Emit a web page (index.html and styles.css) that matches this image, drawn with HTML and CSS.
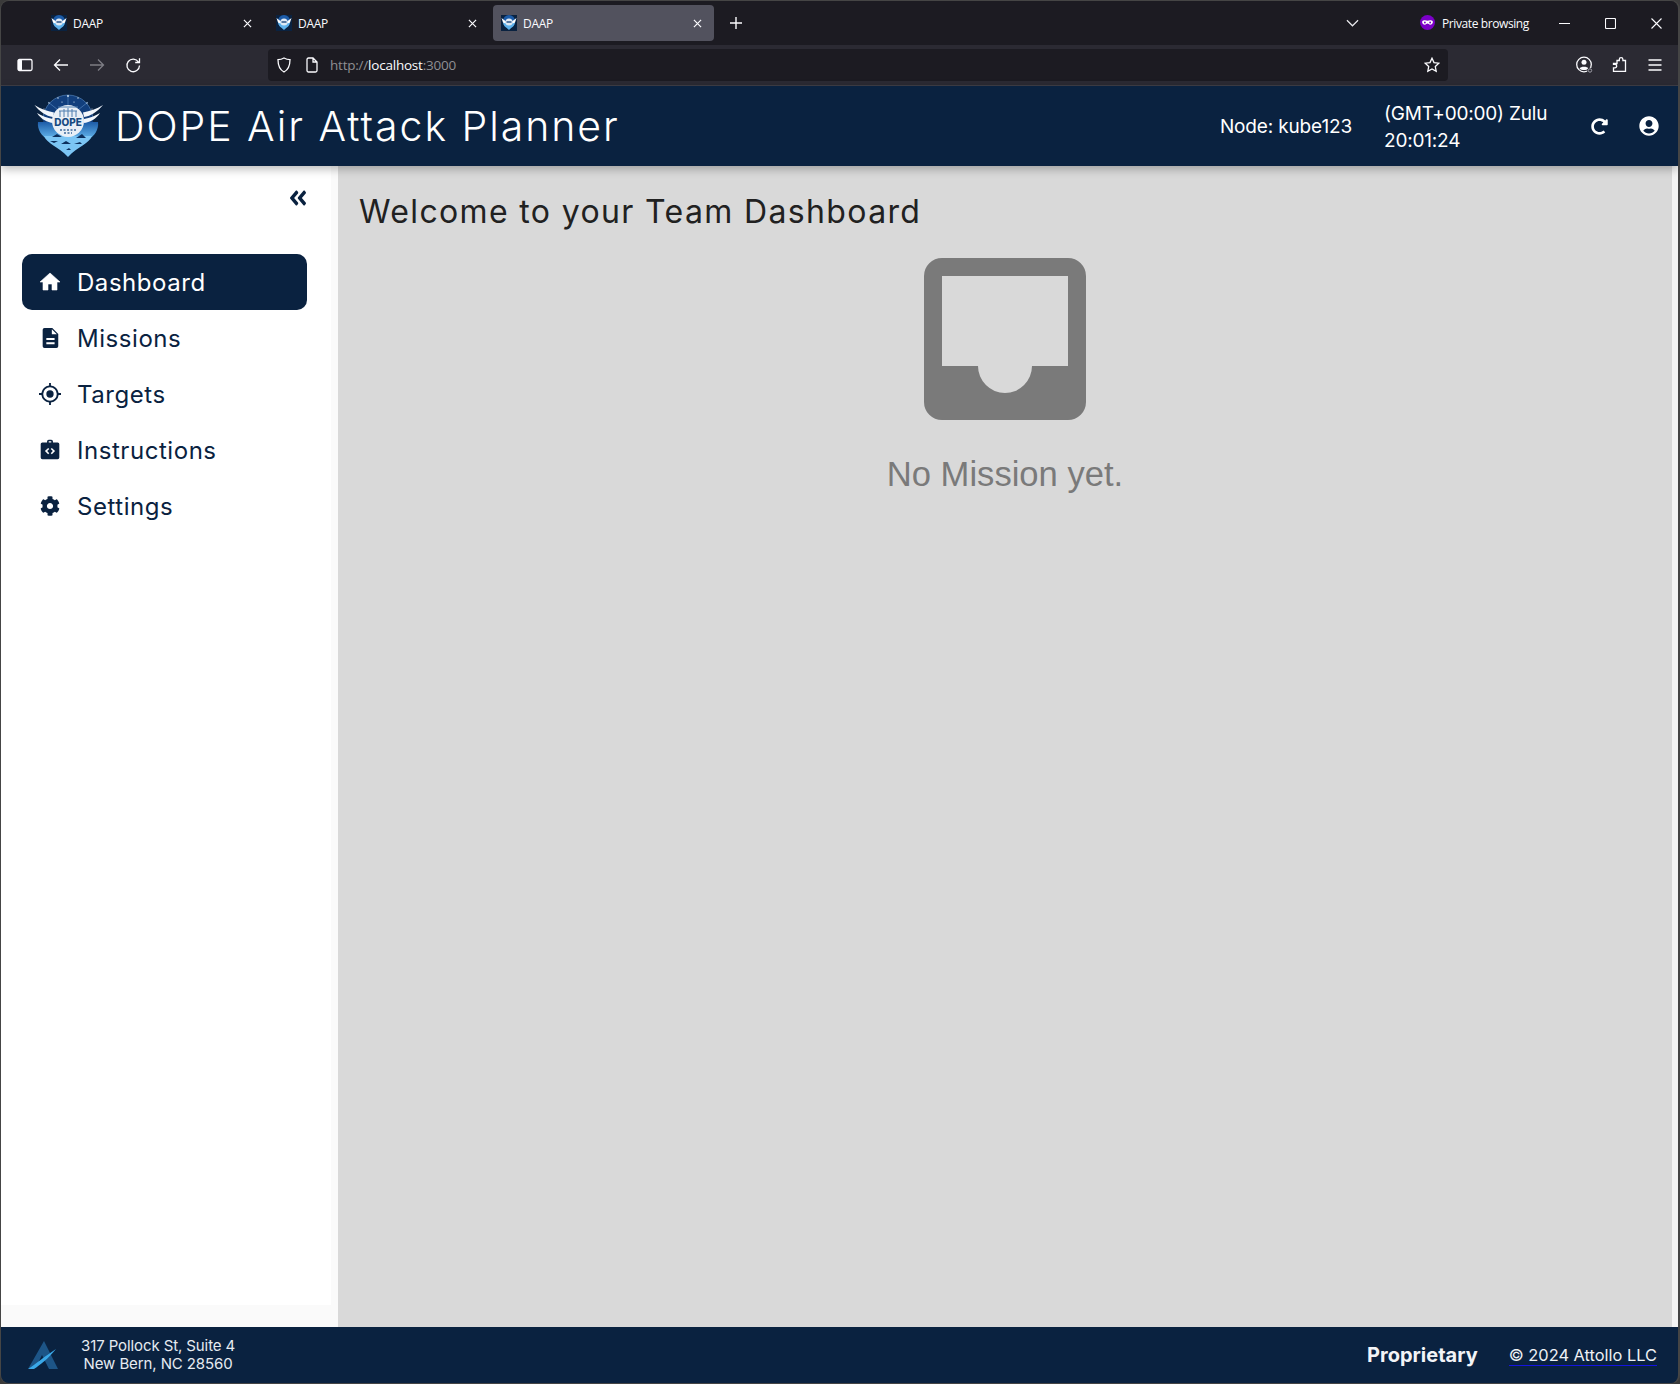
FILE: index.html
```html
<!DOCTYPE html>
<html lang="en">
<head>
<meta charset="utf-8">
<title>DAAP</title>
<link rel="stylesheet" href="styles.css">
</head>
<body>
<svg class="defs" width="0" height="0" aria-hidden="true">
  <defs>
    <linearGradient id="sea" x1="0" y1="0" x2="0" y2="1"><stop offset="0" stop-color="#1d5ca8"/><stop offset="1" stop-color="#66b8ee"/></linearGradient>
    <symbol id="favicon" viewBox="0 0 16 16">
      <rect width="16" height="16" fill="#0a2240"/>
      <circle cx="8" cy="6" r="6" fill="#1d5ca8"/>
      <path d="M2 7h12c0 4-3 5-6 8-3-3-6-4-6-8z" fill="#5fb2ec"/>
      <path d="M0.5 3 5 6.5 4.5 8.5 2 7.5zM15.5 3 11 6.500 11.500 8.500 14 7.500z" fill="#fff"/>
      <circle cx="8" cy="7" r="3.600" fill="#dfe9f3"/>
      <rect x="5.500" y="6.300" width="5" height="1.400" fill="#1d4a80"/>
    </symbol>
  </defs>
</svg>
<div class="window">
  <div class="tabbar">
    <div class="tab"><svg class="favicon"><use href="#favicon"/></svg><span class="tab-title">DAAP</span><svg class="tab-x" viewBox="0 0 10 10"><path d="M1 1l8 8M9 1l-8 8"/></svg></div>
    <div class="tab"><svg class="favicon"><use href="#favicon"/></svg><span class="tab-title">DAAP</span><svg class="tab-x" viewBox="0 0 10 10"><path d="M1 1l8 8M9 1l-8 8"/></svg></div>
    <div class="tab tab-active"><svg class="favicon"><use href="#favicon"/></svg><span class="tab-title">DAAP</span><svg class="tab-x" viewBox="0 0 10 10"><path d="M1 1l8 8M9 1l-8 8"/></svg></div>
    <svg class="new-tab" viewBox="0 0 12 12"><path d="M6 0v12M0 6h12"/></svg>
    <svg class="tab-list" viewBox="0 0 14 8"><path d="M1 1l6 6 6-6"/></svg>
    <div class="private">
      <svg class="private-icon" viewBox="0 0 16 16"><circle cx="8" cy="8" r="8" fill="#7b00c8"/><path d="M2.500 6.500c1-1.300 3.800-1.300 5.500-.3 1.700-1 4.500-1 5.500.3.600 1.500 0 3.800-2.500 3.800-1.500 0-2-1.300-3-1.300s-1.500 1.300-3 1.300c-2.500 0-3.100-2.300-2.500-3.800z" fill="#fff"/><circle cx="5.200" cy="8" r="1" fill="#7b00c8"/><circle cx="10.800" cy="8" r="1" fill="#7b00c8"/></svg>
      <span class="private-label">Private browsing</span>
    </div>
    <div class="win-controls">
      <svg viewBox="0 0 11 11"><path d="M0 5.500h11"/></svg>
      <svg viewBox="0 0 11 11"><rect x=".5" y=".5" width="10" height="10" rx="1"/></svg>
      <svg viewBox="0 0 11 11"><path d="M.5.500l10 10M10.500.500l-10 10"/></svg>
    </div>
  </div>
  <div class="toolbar">
    <div class="nav-icons">
      <svg class="tool" viewBox="0 0 16 16"><rect x="1" y="2.500" width="14" height="11" rx="1.500" class="line"/><rect x="1" y="2.500" width="4" height="11" rx="1" class="solid"/></svg>
      <svg class="tool" viewBox="0 0 16 16"><path class="line" d="M15 8H1.500M7 2.500 1.500 8 7 13.500"/></svg>
      <svg class="tool tool-off" viewBox="0 0 16 16"><path class="line" d="M1 8h13.500M9 2.500 14.500 8 9 13.500"/></svg>
      <svg class="tool" viewBox="0 0 16 16"><path class="line" d="M13.500 5A6.300 6.300 0 1 0 14.500 8.500M14.500 1.200v4.300h-4.300"/></svg>
    </div>
    <div class="urlbar">
      <svg class="url-icon" viewBox="0 0 16 16"><path class="line" d="M8 1c2 1.200 4 1.700 6 1.700 0 5.500-1.500 9.800-6 12.300C3.500 12.500 2 8.200 2 2.700 4 2.700 6 2.200 8 1z"/></svg>
      <svg class="url-icon" viewBox="0 0 16 16"><path class="line" d="M3 2.500A1.500 1.500 0 0 1 4.500 1H9l4 4v8.500a1.500 1.500 0 0 1-1.500 1.500h-7A1.500 1.500 0 0 1 3 13.500zM9 1v4h4"/></svg>
      <span class="url"><span class="url-dim">http://</span>localhost<span class="url-dim">:3000</span></span>
      <svg class="url-star" viewBox="0 0 16 16"><path class="line" d="M8 1.200l2 4.400 4.800.6-3.500 3.300.9 4.800L8 12l-4.200 2.300.9-4.800L1.200 6.200 6 5.600z"/></svg>
    </div>
    <div class="tool-right">
      <svg class="tool tool-account" viewBox="0 0 18 18"><circle class="line" cx="8" cy="8.500" r="7.300"/><circle cx="8" cy="6.300" r="2.500" fill="#fbfbfe"/><path d="M3.500 12.500c1-2.500 8-2.500 9 0-2 2-7 2-9 0z" fill="#fbfbfe"/><circle cx="14" cy="14.500" r="2.800" fill="#2b2a33"/><circle cx="14" cy="14.500" r="1.700" fill="none" stroke="#a0a0a8" stroke-width="1"/></svg>
      <svg class="tool tool-ext" viewBox="0 0 16 16"><path class="line" d="M6 3.500h2.300V2.500a1.800 1.800 0 0 1 3.600 0v1h2.600v10.800H2.500v-3.500H4a1.700 1.700 0 0 0 0-3.400H2.500V6.500H6z"/></svg>
      <svg class="tool" viewBox="0 0 16 16"><path class="line" d="M1.500 3h13M1.500 8h13M1.500 13h13"/></svg>
    </div>
  </div>
  <header class="app-header">
    <svg class="logo" viewBox="0 0 70 64">
      <circle cx="34" cy="26" r="25" fill="#123f7d"/>
      <path d="M34 1v22M34 24 14 8M34 24 54 8M9 26a25 25 0 0 1 50 0" stroke="#5c8fc8" stroke-width=".6" fill="none"/>
      <g fill="#dcebf8"><circle cx="34" cy="2" r=".9"/><circle cx="24" cy="4" r=".7"/><circle cx="44" cy="4" r=".7"/><circle cx="15" cy="9" r=".7"/><circle cx="53" cy="9" r=".7"/><circle cx="10" cy="15" r=".6"/><circle cx="58" cy="15" r=".6"/><circle cx="28" cy="8" r=".6"/><circle cx="40" cy="8" r=".6"/></g>
      <path d="M4 28H64C65 36 60 42 55 45H13C8 42 3 36 4 28z" fill="url(#sea)"/>
      <path d="M10 42H58C55 50 44 52 34 63 24 52 13 50 10 42z" fill="#7cc5f4"/>
      <path d="M18 43l5-3 5 3zM42 44l6-4 4 4zM27 50l5-3 5 3zM16 47h8l-4 2zM40 50l6-2 2 2zM32 56l3-2 2 2z" fill="#0d2f5c"/>
      <path d="M0.500 11C7 15 13 17 20 18.500L19 23C12 22 6 18 .5 11zM3 19C8 22 13 24 19 25L19.500 29C13 28.500 7 25 3 19z" fill="#f2f6fb"/>
      <path d="M69 11C62.500 15 56 17 49 18.500L50 23C57 22 63 18 69 11zM66 19C61 22 56 24 50 25L49.500 29C56 28.500 62 25 66 19z" fill="#f2f6fb"/>
      <circle cx="34" cy="27" r="16" fill="#e9eff6"/>
      <path d="M24 13h20M26 17v6M30 15v8M34 14v9M38 15v8M42 17v6M25 17h18" stroke="#4f7fb0" stroke-width="1" fill="none"/>
      <text x="34" y="31.500" class="logo-text">DOPE</text>
      <path d="M26 36h16M30 39h8" stroke="#3b6a9c" stroke-width="1.400" stroke-dasharray="2 1.500" fill="none"/>
    </svg>
    <h1 class="app-title">DOPE Air Attack Planner</h1>
    <div class="node">Node: kube123</div>
    <div class="clock"><div>(GMT+00:00) Zulu</div><div>20:01:24</div></div>
    <svg class="head-refresh" viewBox="0 0 512 512"><path d="M256.455 8c66.269.119 126.437 26.233 170.859 68.685l35.715-35.715C478.149 25.851 504 36.559 504 57.941V192c0 13.255-10.745 24-24 24H345.941c-21.382 0-32.090-25.851-16.971-40.971l41.750-41.750c-30.864-28.899-70.801-44.907-113.230-45.273-92.398-.798-170.283 73.977-169.484 169.442C88.764 348.009 162.184 424 256 424c41.127 0 79.997-14.678 110.629-41.556 4.743-4.161 11.906-3.908 16.368.553l39.662 39.662c4.872 4.872 4.631 12.815-.482 17.433C378.202 479.813 319.926 504 256 504 119.034 504 8.001 392.967 8 256.002 7.999 119.193 119.646 7.755 256.455 8z"/></svg>
    <svg class="head-user" viewBox="0 0 496 512"><path d="M248 8C111 8 0 119 0 256s111 248 248 248 248-111 248-248S385 8 248 8zm0 96c48.600 0 88 39.400 88 88s-39.400 88-88 88-88-39.400-88-88 39.400-88 88-88zm0 344c-58.700 0-111.300-26.600-146.500-68.200 18.800-35.400 55.600-59.800 98.500-59.800 2.400 0 4.800.4 7.100 1.100 13 4.200 26.600 6.900 40.900 6.900 14.300 0 28-2.700 40.900-6.900 2.300-.7 4.700-1.100 7.100-1.100 42.900 0 79.700 24.400 98.500 59.800C359.300 421.400 306.700 448 248 448z"/></svg>
  </header>
  <div class="body-row">
    <aside class="sidebar">
      <div class="side-panel">
        <div class="collapse-row">
          <svg class="collapse" viewBox="0 0 448 512" preserveAspectRatio="none"><path d="M223.700 239l136-136c9.400-9.400 24.600-9.400 33.900 0l22.600 22.600c9.400 9.400 9.400 24.600 0 33.900L319.900 256l96.400 96.400c9.400 9.400 9.400 24.600 0 33.900L393.700 409c-9.400 9.400-24.600 9.400-33.900 0l-136-136c-9.500-9.400-9.500-24.600-.1-34zm-192 34l136 136c9.400 9.400 24.600 9.400 33.900 0l22.600-22.600c9.400-9.400 9.400-24.600 0-33.900L127.900 256l96.400-96.400c9.400-9.400 9.400-24.600 0-33.900L201.700 103c-9.400-9.400-24.600-9.400-33.900 0l-136 136c-9.500 9.400-9.500 24.600-.1 34z"/></svg>
        </div>
        <nav class="nav">
          <a class="nav-item nav-active"><svg class="nav-icon" viewBox="1 1 22 22"><path d="M10 20v-6h4v6h5v-8h3L12 3 2 12h3v8z" stroke="currentColor" stroke-width=".6" stroke-linejoin="round"/></svg><span>Dashboard</span></a>
          <a class="nav-item"><svg class="nav-icon" viewBox="0 0 24 24"><path fill-rule="evenodd" d="M6 1h8.500L21 7.500V21a2 2 0 0 1-2 2H6a2 2 0 0 1-2-2V3a2 2 0 0 1 2-2zM8 12v2.200h9V12zM8 16.500v2.200h9v-2.200zM14 2.500V8h5.500z"/></svg><span>Missions</span></a>
          <a class="nav-item"><svg class="nav-icon" viewBox="0 0 24 24"><path fill-rule="evenodd" d="M11 0h2v2.600A9.500 9.500 0 0 1 21.400 11H24v2h-2.600A9.500 9.500 0 0 1 13 21.400V24h-2v-2.600A9.500 9.500 0 0 1 2.600 13H0v-2h2.600A9.500 9.500 0 0 1 11 2.600zM12 4.600a7.400 7.400 0 1 0 0 14.800 7.400 7.400 0 0 0 0-14.800zM12 8a4 4 0 1 1 0 8 4 4 0 0 1 0-8z"/></svg><span>Targets</span></a>
          <a class="nav-item"><svg class="nav-icon" viewBox="-1 -1 26 26"><path fill-rule="evenodd" d="M8.500 3V2a2 2 0 0 1 2-2h3a2 2 0 0 1 2 2v1H21a2 2 0 0 1 2 2v16a2 2 0 0 1-2 2H3a2 2 0 0 1-2-2V5a2 2 0 0 1 2-2zM10.500 3h3V1.800h-3zM9.800 9.500 6 13.300l3.800 3.800 1.300-1.400-2.400-2.400 2.400-2.400zM14.200 9.500l-1.300 1.400 2.400 2.400-2.400 2.400 1.300 1.400 3.800-3.800z"/></svg><span>Instructions</span></a>
          <a class="nav-item"><svg class="nav-icon" viewBox="-26 -26 564 564"><path d="M487.400 315.700l-42.600-24.600c4.300-23.200 4.300-47 0-70.200l42.600-24.600c4.900-2.800 7.100-8.600 5.500-14-11.100-35.600-30-67.800-54.700-94.600-3.800-4.100-10-5.100-14.800-2.300L380.800 110c-17.900-15.400-38.500-27.300-60.800-35.100V25.800c0-5.600-3.900-10.500-9.400-11.700-36.700-8.200-74.300-7.800-109.200 0-5.500 1.200-9.400 6.100-9.400 11.700V75c-22.200 7.900-42.800 19.800-60.800 35.100L88.700 85.500c-4.900-2.800-11-1.900-14.800 2.300-24.700 26.700-43.600 58.900-54.700 94.600-1.700 5.400.6 11.200 5.500 14L67.300 221c-4.300 23.200-4.300 47 0 70.200l-42.600 24.600c-4.900 2.800-7.100 8.600-5.500 14 11.100 35.600 30 67.800 54.700 94.600 3.800 4.100 10 5.100 14.800 2.300l42.600-24.600c17.900 15.400 38.500 27.300 60.800 35.100v49.200c0 5.600 3.900 10.500 9.400 11.700 36.700 8.200 74.300 7.800 109.200 0 5.500-1.200 9.400-6.100 9.400-11.700v-49.200c22.200-7.900 42.800-19.800 60.800-35.100l42.600 24.600c4.900 2.800 11 1.900 14.800-2.300 24.700-26.700 43.600-58.900 54.700-94.600 1.500-5.500-.7-11.300-5.600-14.100zM256 336c-44.100 0-80-35.900-80-80s35.900-80 80-80 80 35.900 80 80-35.900 80-80 80z"/></svg><span>Settings</span></a>
        </nav>
      </div>
    </aside>
    <main class="main">
      <div class="content">
        <h2 class="page-title">Welcome to your Team Dashboard</h2>
        <div class="empty">
          <svg class="empty-icon" viewBox="0 0 162 162"><path fill-rule="evenodd" d="M18 0H144A18 18 0 0 1 162 18V144A18 18 0 0 1 144 162H18A18 18 0 0 1 0 144V18A18 18 0 0 1 18 0zM18 18V108H54A27 27 0 0 0 108 108H144V18z"/></svg>
          <p class="empty-text">No Mission yet.</p>
        </div>
      </div>
      <div class="main-edge"></div>
    </main>
  </div>
  <footer class="app-footer">
    <svg class="foot-logo" viewBox="0 0 30 29"><path d="M16 0 30 28H21L14 14 9 24 0 28z" fill="#1d5587"/><path d="M0 28C8 23 17 15 28 8 20 18 12 24 6 28z" fill="#3aa8e8"/></svg>
    <div class="address"><div>317 Pollock St, Suite 4</div><div>New Bern, NC 28560</div></div>
    <strong class="proprietary">Proprietary</strong>
    <a class="copyright">© 2024 Attollo LLC</a>
  </footer>
</div>
</body>
</html>
```
FILE: styles.css
```css
* { box-sizing: border-box; }
html, body { margin: 0; height: 1384px; background: #3a3a3a; overflow: hidden; }
.defs { display: block; height: 0; }
svg { display: block; flex: none; }

.window {
  height: 1384px;
  border-radius: 9px;
  overflow: hidden;
  border: solid #454545;
  border-width: 1px 2px 1px 1px;
  display: flex;
  flex-direction: column;
  font-family: Inter, "Liberation Sans", sans-serif;
  font-optical-sizing: none;
}

/* browser chrome */
.tabbar {
  height: 44px;
  background: #1c1b22;
  display: flex;
  align-items: flex-start;
  padding: 4px 0 0 42px;
  flex: none;
  color: #fbfbfe;
  font-family: "Open Sans", sans-serif;
}
.tab {
  width: 221px;
  height: 36px;
  margin-right: 4px;
  border-radius: 4px;
  display: flex;
  align-items: center;
  padding: 0 12px 0 8px;
}
.tab-active { background: #52525e; }
.favicon { width: 16px; height: 16px; }
.tab-title { margin-left: 6px; font-size: 12px; flex: 1; letter-spacing: -.3px; }
.tab-x { width: 9px; height: 9px; fill: none; stroke: #fbfbfe; stroke-width: 1.3; }
.new-tab { width: 12px; height: 12px; fill: none; stroke: #fbfbfe; stroke-width: 1.4; margin: 12px 0 0 12px; }
.tab-list { width: 13px; height: 8px; fill: none; stroke: #e8e8ec; stroke-width: 1.3; margin: 14px 0 0 604px; }
.private { display: flex; align-items: center; margin: 7px 0 0 61px; font-size: 12px; letter-spacing: -.4px; height: 20px; }
.private-icon { width: 15px; height: 15px; margin-right: 7px; }
.private-label { margin-top: 2px; }
.win-controls { display: flex; margin: 13px 0 0 30px; gap: 35px; }
.win-controls svg { width: 11px; height: 11px; fill: none; stroke: #fbfbfe; stroke-width: 1.1; }

.toolbar {
  height: 41px;
  background: #2b2a33;
  border-bottom: 1px solid #3f3e47;
  display: flex;
  align-items: center;
  flex: none;
  padding: 0 15px 0 16px;
}
.tool { width: 16px; height: 16px; overflow: visible; }
.tool-account { width: 18px; height: 18px; }
.tool-ext { margin: 0 1px 0 -2px; }
.tool-off { opacity: .4; }
.line { fill: none; stroke: #fbfbfe; stroke-width: 1.3; }
.solid { fill: #fbfbfe; }
.nav-icons { display: flex; gap: 20px; width: 251px; }
.urlbar {
  width: 1180px;
  height: 32px;
  background: #1c1b22;
  border-radius: 4px;
  display: flex;
  align-items: center;
  padding: 0 8px;
}
.url-icon { width: 16px; height: 16px; margin-right: 12px; }
.url-icon + .url-icon { margin-right: 10px; }
.url { flex: 1; font: 13.5px "Open Sans", sans-serif; color: #fbfbfe; letter-spacing: -.22px; }
.url-dim { color: #8f8f93; }
.url-star { width: 16px; height: 16px; }
.tool-right { display: flex; align-items: center; gap: 19px; margin-left: auto; }

/* app header */
.app-header {
  height: 80px;
  background: #0a2240;
  color: #fff;
  display: flex;
  align-items: center;
  flex: none;
  position: relative;
  z-index: 2;
  box-shadow: 0 3px 9px rgba(0, 0, 0, .28);
  padding-left: 33px;
}
.logo { width: 70px; height: 64px; }
.logo-text { font: 800 10px Inter, sans-serif; fill: #174a80; text-anchor: middle; }
.app-title { margin: 0 0 0 11px; font-size: 41px; font-weight: 300; letter-spacing: 1.95px; flex: 1; white-space: nowrap; }
.node { font-size: 19px; font-weight: 400; letter-spacing: -.15px; margin-right: 32px; }
.clock { font-size: 19px; line-height: 27px; letter-spacing: -.2px; width: 207px; margin-top: 2px; }
.head-refresh { width: 17px; height: 17px; fill: #fff; margin-right: 31px; }
.head-user { width: 20px; height: 20px; fill: #fff; margin-right: 19px; }

/* body */
.body-row { flex: 1; display: flex; min-height: 0; }
.sidebar { width: 337px; background: #fafafa; padding: 0 7px 22px 0; flex: none; display: flex; }
.side-panel { flex: 1; background: #fff; padding: 0 24px 0 21px; }
.collapse-row { height: 88px; padding-top: 20px; display: flex; justify-content: flex-end; }
.collapse { width: 18px; height: 24px; fill: #0a2240; }
.nav { display: flex; flex-direction: column; }
.nav-item {
  height: 56px;
  border-radius: 10px;
  display: flex;
  align-items: center;
  padding-left: 17px;
  color: #0a2240;
  font-size: 24px;
  letter-spacing: .55px;
  gap: 16px;
}
.nav-active { background: #0a2240; color: #fff; }
.nav-icon { width: 22px; height: 22px; fill: currentColor; }

.main { flex: 1; background: #d9d9d9; display: flex; }
.content { flex: 1; padding-top: 26px; display: flex; flex-direction: column; }
.main-edge { width: 6px; background: #f4f4f4; }
.page-title { margin: 0 0 0 21px; font-size: 32px; font-weight: 400; color: #212121; line-height: 40px; letter-spacing: 1.36px; }
.empty { display: flex; flex-direction: column; align-items: center; margin-top: 26px; }
.empty-icon { width: 162px; height: 162px; fill: #7a7a7a; }
.empty-text { margin: 35px 0 0; font: 34.6px "Liberation Sans", sans-serif; color: #7a7a7a; }

/* footer */
.app-footer {
  height: 56px;
  background: #0a2240;
  color: #e6ebf1;
  display: flex;
  align-items: center;
  flex: none;
  padding: 0 21px 0 27px;
}
.foot-logo { width: 30px; height: 29px; }
.address { margin-left: 23px; font-size: 15px; line-height: 18px; text-align: center; letter-spacing: -.1px; }
.proprietary { margin-left: auto; font-size: 20px; font-weight: 700; color: #f2f4f7; }
.copyright { margin-left: 31px; margin-top: 2px; font-size: 16.4px; border-bottom: 1px solid #1414e0; line-height: 19px; color: #eef1f5; }
```
